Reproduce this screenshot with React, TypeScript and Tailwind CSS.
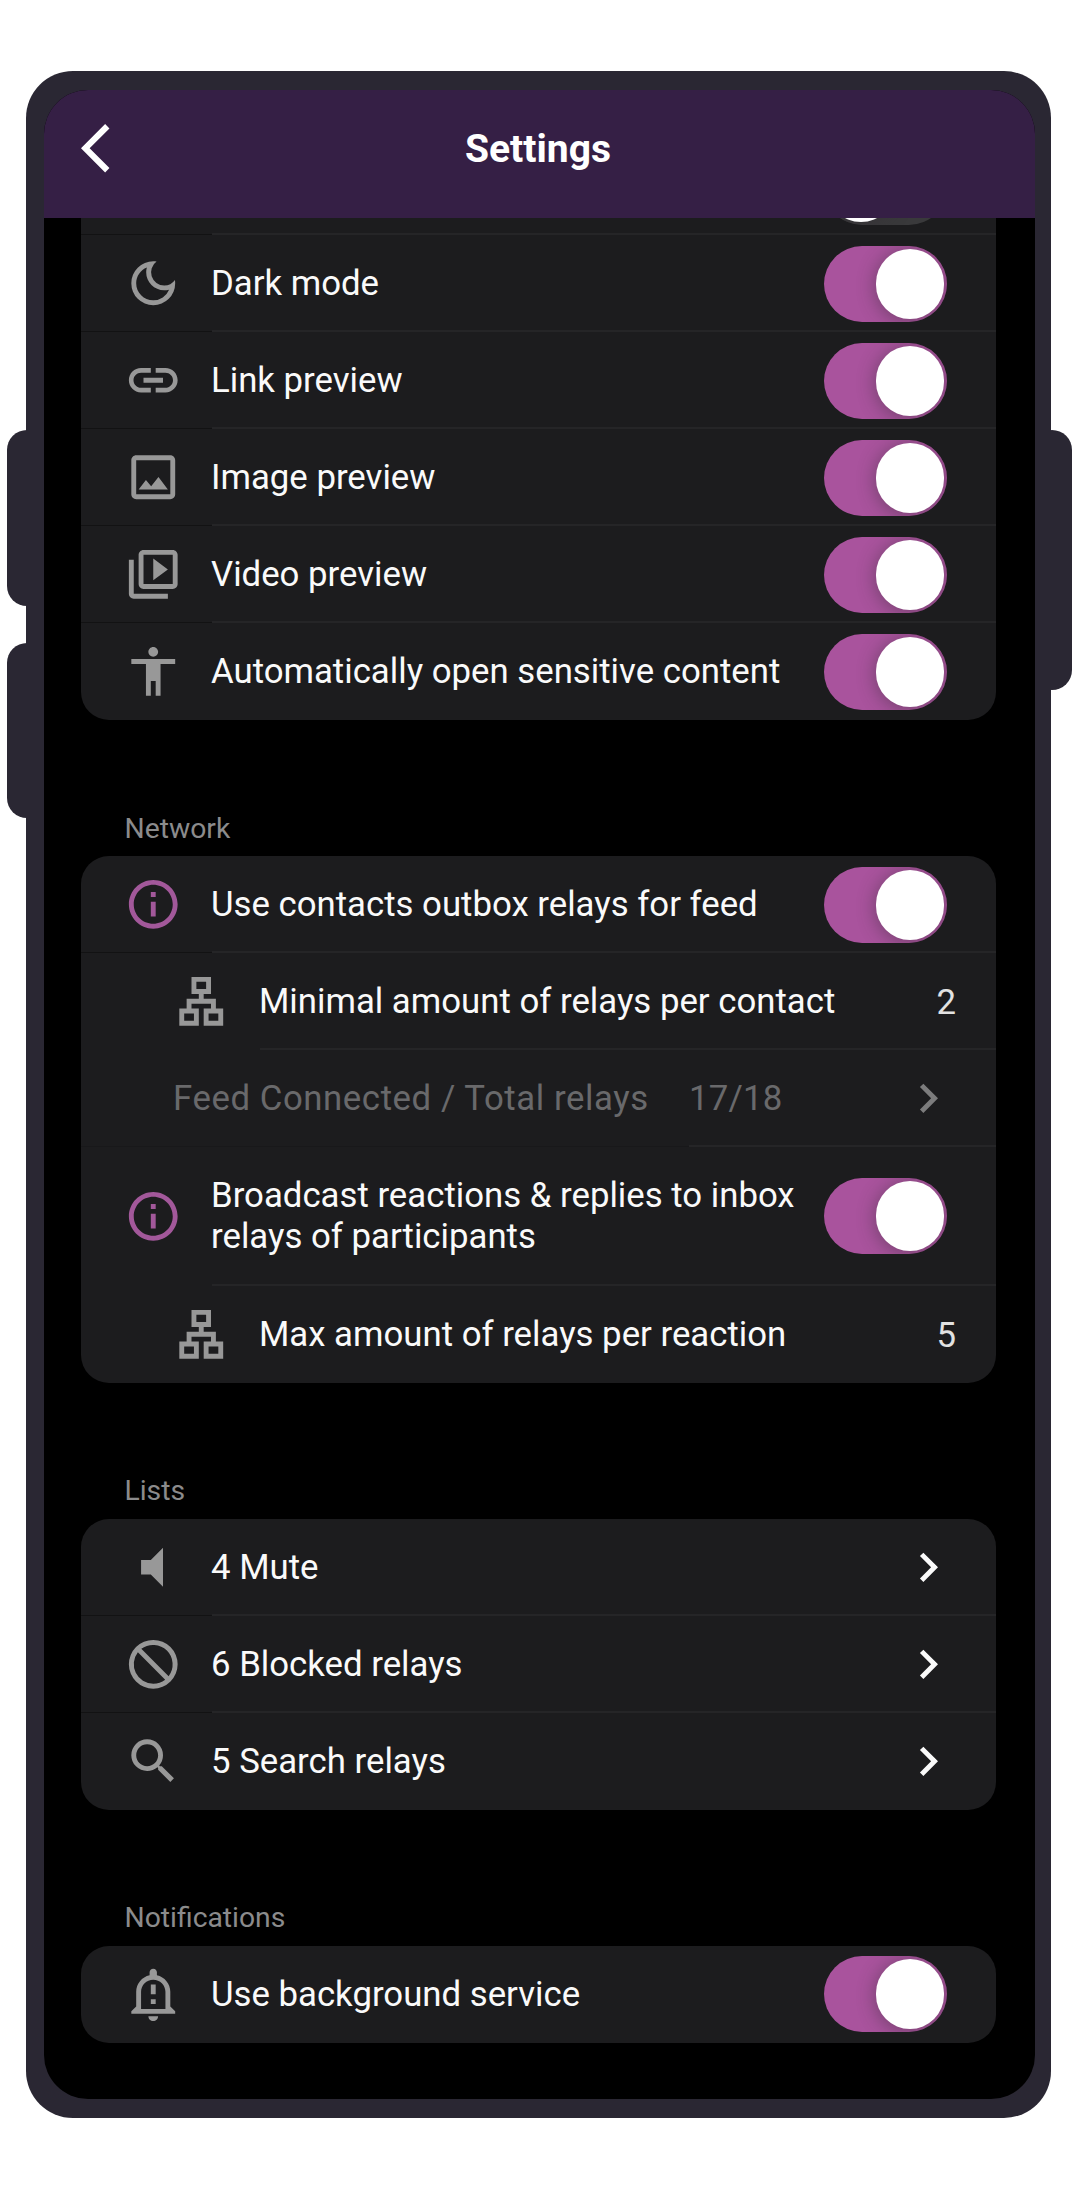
import type { ReactNode } from 'react';
import clsx from 'clsx';

const ICONS = {
  moon: 'M9.37 5.51A7.35 7.35 0 0 0 9.1 7.5c0 4.08 3.32 7.4 7.4 7.4.68 0 1.35-.09 1.99-.27A7.014 7.014 0 0 1 12 19c-3.86 0-7-3.14-7-7 0-2.93 1.81-5.45 4.37-6.49zM12 3a9 9 0 1 0 9 9c0-.46-.04-.92-.1-1.36a5.389 5.389 0 0 1-4.4 2.26 5.403 5.403 0 0 1-3.14-9.8c-.44-.06-.9-.1-1.36-.1z',
  link: 'M3.9 12c0-1.71 1.39-3.1 3.1-3.1h4V7H7c-2.76 0-5 2.24-5 5s2.24 5 5 5h4v-1.9H7c-1.71 0-3.1-1.39-3.1-3.1zM8 13h8v-2H8v2zm9-6h-4v1.9h4c1.71 0 3.1 1.39 3.1 3.1s-1.39 3.1-3.1 3.1h-4V17h4c2.76 0 5-2.24 5-5s-2.24-5-5-5z',
  image:
    'M19 5v14H5V5h14m0-2H5c-1.1 0-2 .9-2 2v14c0 1.1.9 2 2 2h14c1.1 0 2-.9 2-2V5c0-1.1-.9-2-2-2zm-4.86 8.86-3 3.87L9 13.14 6 17h12l-3.86-5.14z',
  video:
    'M4 6H2v14c0 1.1.9 2 2 2h14v-2H4V6zm16-4H8c-1.1 0-2 .9-2 2v12c0 1.1.9 2 2 2h12c1.1 0 2-.9 2-2V4c0-1.1-.9-2-2-2zm0 14H8V4h12v12zM12 5.5v9l6-4.5z',
  person: 'M12 2c1.1 0 2 .9 2 2s-.9 2-2 2-2-.9-2-2 .9-2 2-2zm9 7h-6v13h-2v-6h-2v6H9V9H3V7h18v2z',
  info: 'M11 7h2v2h-2zm0 4h2v6h-2zm1-9C6.48 2 2 6.48 2 12s4.48 10 10 10 10-4.48 10-10S17.52 2 12 2zm0 18c-4.41 0-8-3.59-8-8s3.59-8 8-8 8 3.59 8 8-3.59 8-8 8z',
  lan: 'M13 22h8v-7h-3v-4h-5V9h3V2H8v7h3v2H6v4H3v7h8v-7H8v-2h8v2h-3v7zM10 7V4h4v3h-4zM9 17v3H5v-3h4zm10 0v3h-4v-3h4z',
  mute: 'M7 9v6h4l5 5V4l-5 5H7z',
  blocked:
    'M12 2a10 10 0 1 0 0 20 10 10 0 0 0 0-20zm0 18a8 8 0 0 1-6.31-12.9L16.9 18.31A7.9 7.9 0 0 1 12 20zm6.31-3.1L7.1 5.69A8 8 0 0 1 18.31 16.9z',
  search:
    'M15.5 14h-.79l-.28-.27A6.471 6.471 0 0 0 16 9.5 6.5 6.5 0 1 0 9.5 16c1.61 0 3.09-.59 4.23-1.57l.27.28v.79l5 4.99L20.49 19l-4.99-5zm-6 0C7.01 14 5 11.99 5 9.5S7.01 5 9.5 5 14 7.01 14 9.5 11.99 14 9.5 14z',
  bell: 'M12 23c1.1 0 1.99-.89 1.99-1.99h-3.98c0 1.1.89 1.99 1.99 1.99zm7-6v-6c0-3.35-2.36-6.15-5.5-6.83V3c0-.83-.67-1.5-1.5-1.5s-1.5.67-1.5 1.5v1.17C7.36 4.85 5 7.65 5 11v6l-2 2v1h18v-1l-2-2zm-2 1H7v-7c0-2.76 2.24-5 5-5s5 2.24 5 5v7zM11 8h2v4h-2zm0 6h2v2h-2z',
  chevron: 'M10 6 8.59 7.41 13.17 12l-4.58 4.59L10 18l6-6z',
  back: 'M11.67 3.87 9.9 2.1 0 12l9.9 9.9 1.77-1.77L3.54 12z',
};

function Icon({ name, className }: { name: keyof typeof ICONS; className?: string }) {
  return (
    <svg viewBox="0 0 24 24" fill="currentColor" className={clsx('size-[58.5px] shrink-0', className)}>
      <path d={ICONS[name]} />
    </svg>
  );
}

function Toggle({ on = true }: { on?: boolean }) {
  return (
    <div
      className={clsx(
        'mr-[49px] flex h-[76px] w-[123px] shrink-0 items-center overflow-hidden rounded-full px-[3px]',
        on ? 'justify-end bg-[#a9539d]' : 'justify-start bg-[#39393b]',
      )}
    >
      <div className="h-[70px] w-[68px] rounded-full bg-white shadow-[0_2px_18px_1px_rgba(50,45,50,0.45)]" />
    </div>
  );
}

type RowProps = {
  icon?: keyof typeof ICONS;
  accent?: boolean;
  sub?: boolean;
  tall?: boolean;
  label?: string;
  last?: boolean;
  gutterLine?: boolean;
  children?: ReactNode;
};

function Row({ icon, accent, sub, tall, label, last, gutterLine = true, children }: RowProps) {
  return (
    <div className={clsx('flex', tall ? 'h-[138.5px]' : 'h-[97px]')}>
      <div
        className={clsx(
          'flex shrink-0 items-center border-b pt-px',
          sub ? 'w-[179px] pl-[91px]' : 'w-[131px] pl-[43px]',
          last || !gutterLine ? 'border-transparent' : 'border-[#121213]',
        )}
      >
        {icon && <Icon name={icon} className={accent ? 'text-[#a2589a]' : 'text-[#989898]'} />}
      </div>
      <div
        className={clsx(
          'flex min-w-0 flex-1 items-center justify-between border-b-2 pt-0.5',
          last ? 'border-transparent' : 'border-[#252527]',
        )}
      >
        <span className="-ml-px whitespace-pre-line">{label}</span>
        {children}
      </div>
    </div>
  );
}

function Card({ children }: { children: ReactNode }) {
  return <div className="overflow-hidden rounded-[28px] bg-[#1c1c1e]">{children}</div>;
}

function SectionTitle({ children }: { children: ReactNode }) {
  return (
    <h2 className="flex h-[136px] items-end pb-[11.5px] pl-[43.5px] text-[28.3px] leading-[33px] text-[#8b8b8c]">
      {children}
    </h2>
  );
}

function Value({ children }: { children: ReactNode }) {
  return <span className="mr-[40px] pt-[2px] text-[#e2e2e2]">{children}</span>;
}

function Chevron({ className }: { className?: string }) {
  return <Icon name="chevron" className={clsx('mr-[38.5px]', className)} />;
}

export default function App() {
  return (
    <div className="relative h-[2190px] w-[1080px] overflow-hidden bg-white pl-[25.5px] pt-[71px] font-[Roboto,sans-serif]">
      {/* Hardware buttons on the sides of the phone */}
      <div className="absolute left-[7px] top-[430px] h-[176px] w-[40px] rounded-[20px] bg-[#2a2733]" />
      <div className="absolute left-[7px] top-[643px] h-[175px] w-[40px] rounded-[20px] bg-[#2a2733]" />
      <div className="absolute left-[1032px] top-[430px] h-[260px] w-[40px] rounded-[20px] bg-[#2a2733]" />

      <div className="relative h-[2047px] w-[1025px] rounded-[47px] bg-[#2a2733] pb-[19px] pl-[18.5px] pr-[15.5px] pt-[19px]">
        <div className="flex h-full flex-col overflow-hidden rounded-[44px] bg-black">
          <header className="grid h-[128px] shrink-0 grid-cols-[1fr_auto_1fr] items-center bg-[#351f45] pb-[11px] text-white">
            <Icon name="back" className="ml-[37px]" />
            <h1 className="pr-[3px] text-[39px] font-bold leading-[48px]">Settings</h1>
          </header>

          <main className="flex-1 overflow-hidden pl-[37px] pr-[39px] text-[34.75px] leading-[41px] text-[#fafafa]">
            <div className="-mt-[80px]">
              <Card>
                <Row>
                  <Toggle on={false} />
                </Row>
                <Row icon="moon" label="Dark mode">
                  <Toggle />
                </Row>
                <Row icon="link" label="Link preview">
                  <Toggle />
                </Row>
                <Row icon="image" label="Image preview">
                  <Toggle />
                </Row>
                <Row icon="video" label="Video preview">
                  <Toggle />
                </Row>
                <Row icon="person" label="Automatically open sensitive content" last>
                  <Toggle />
                </Row>
              </Card>

              <SectionTitle>Network</SectionTitle>
              <Card>
                <Row icon="info" accent label="Use contacts outbox relays for feed">
                  <Toggle />
                </Row>
                <Row icon="lan" sub label="Minimal amount of relays per contact" gutterLine={false}>
                  <Value>2</Value>
                </Row>
                <div className="flex h-[97px] text-[#69696b]">
                  <div className="flex w-[608px] shrink-0 items-center border-b border-[#18181a] pl-[92px] pt-px">
                    <span className="whitespace-nowrap tracking-[0.57px]">Feed Connected / Total relays</span>
                  </div>
                  <div className="flex flex-1 items-center justify-between border-b-2 border-[#252527] pt-0.5">
                    <span className="tracking-[0.2px]">17/18</span>
                    <Chevron className="text-[#7c7c7d]" />
                  </div>
                </div>
                <Row
                  icon="info"
                  accent
                  tall
                  gutterLine={false}
                  label={'Broadcast reactions & replies to inbox\nrelays of participants'}
                >
                  <Toggle />
                </Row>
                <Row icon="lan" sub label="Max amount of relays per reaction" last>
                  <Value>5</Value>
                </Row>
              </Card>

              <SectionTitle>Lists</SectionTitle>
              <Card>
                <Row icon="mute" label="4 Mute">
                  <Chevron />
                </Row>
                <Row icon="blocked" label="6 Blocked relays">
                  <Chevron />
                </Row>
                <Row icon="search" label="5 Search relays" last>
                  <Chevron />
                </Row>
              </Card>

              <SectionTitle>Notifications</SectionTitle>
              <Card>
                <Row icon="bell" label="Use background service" last>
                  <Toggle />
                </Row>
              </Card>
            </div>
          </main>
        </div>
      </div>
    </div>
  );
}
